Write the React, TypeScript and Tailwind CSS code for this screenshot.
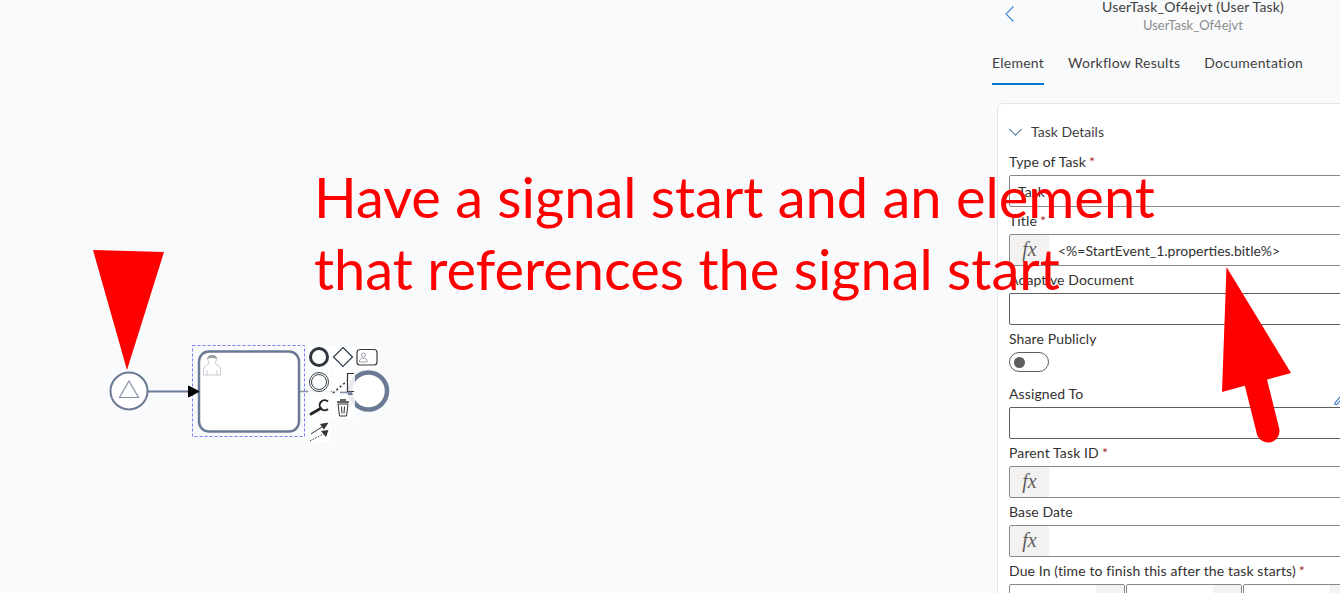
import React from "react";

const font = { fontFamily: 'Lato, sans-serif' };

function Label({ text, req, h = "h-[27px]" }: { text: string; req?: boolean; h?: string }) {
  return (
    <div className={`${h} flex items-center text-[14px] tracking-[0.12px] leading-none text-[#323130] whitespace-nowrap`}>
      {text}
      {req && <span className="ml-[3px] text-[#a4262c]">*</span>}
    </div>
  );
}

function Fx() {
  return (
    <div className="w-[39px] h-full bg-[#f3f2f1] flex items-center justify-center pb-[2px] text-[20px] italic text-[#605e5c] shrink-0 rounded-l-[2px] [font-family:'Liberation_Serif',serif]">
      fx
    </div>
  );
}

function FxInput({ value }: { value?: string }) {
  return (
    <div className="h-[32px] border border-[#8a8886] rounded-[2px] bg-white flex items-center">
      <Fx />
      <span className="ml-[9px] text-[14px] text-[#323130]">{value}</span>
    </div>
  );
}

function Select({ value, light }: { value?: string; light?: boolean }) {
  return (
    <div className={`h-[32px] border ${light ? "border-[#8a8886]" : "border-[#605e5c]"} rounded-[2px] bg-white flex items-center pl-[8px] pr-[38px] justify-between`}>
      <span className="text-[14px] text-[#323130]">{value}</span>
      <span className="w-[5px] h-[5px] border-r border-b border-[#8a6a4a] rotate-45" />
    </div>
  );
}

const tiles: [number, number][] = [
  [308, 346], [332, 346], [356, 346],
  [308, 370], [332, 370],
  [308, 395], [332, 395],
  [308, 419],
];

function Diagram() {
  return (
    <svg className="absolute left-0 top-0" width="420" height="460" viewBox="0 0 420 460" fill="none">
      <line x1="148" y1="391.5" x2="192" y2="391.5" stroke="#6b7a94" strokeWidth="2" />
      <circle cx="129" cy="391" r="18.5" fill="#fff" stroke="#6b7a94" strokeWidth="2" />
      <path d="M129 381 L138.5 397.5 H119.5 Z" stroke="#8592a8" strokeWidth="1.2" />
      <rect x="192.5" y="345.5" width="112" height="91" stroke="#7c7cf5" strokeWidth="1" strokeDasharray="3 2" />
      <rect x="199" y="351.5" width="100" height="80" rx="10" fill="#fff" stroke="#6b7a94" strokeWidth="2.5" />
      <path d="M188.5 386 L199 391.5 L188.5 397 Z" fill="#000" stroke="#000" />
      {/* user icon */}
      <path d="M203.5 375 V369 Q204 365.5 209 364 V362 Q206.5 359 208 357 Q212 354 216 357 Q217.5 359.5 215.5 362 V364 Q220.5 365.5 220.5 369 V375 Z" stroke="#c8ccd3" strokeWidth="1" fill="#fff" />
      <path d="M207 359 Q208 354.5 212 355 Q216.5 354.5 217 359 Q213 357 207 359 Z" fill="#9aa0a8" />
      <path d="M207 375 V370 M217 375 V370" stroke="#c8ccd3" />
      {/* outgoing connection and end event, under the pad */}
      <line x1="300" y1="391.5" x2="350" y2="391.5" stroke="#8592a8" strokeWidth="1.5" />
      <circle cx="368.5" cy="391" r="18.5" fill="#fff" stroke="#6b7a94" strokeWidth="4.5" />
      {/* context pad */}
      {tiles.map(([x, y]) => (
        <rect key={`${x}-${y}`} x={x} y={y} width="23" height="23" fill="#ffffff" fillOpacity="0.85" />
      ))}
      <circle cx="319" cy="357" r="8.5" stroke="#2f3640" strokeWidth="3" />
      <path d="M343 347.5 L352.5 357 L343 366.5 L333.5 357 Z" fill="#fff" stroke="#2f3a4a" strokeWidth="1.2" />
      <rect x="357" y="349.5" width="20" height="15.5" rx="3" fill="#fff" stroke="#3a3a3a" strokeWidth="1.2" />
      <circle cx="363.5" cy="355" r="2" stroke="#9aa0a8" />
      <path d="M359.5 362 V360 Q361 358 363.5 358 Q366 358 367 360 V362 Z" stroke="#9aa0a8" />
      <circle cx="319" cy="382" r="9.5" stroke="#3a4048" strokeWidth="1" />
      <circle cx="319" cy="382" r="7.5" stroke="#3a4048" strokeWidth="1" />
      <path d="M333 393 L347 381" stroke="#2a2a2a" strokeWidth="1.5" strokeDasharray="2 2.5" />
      <path d="M354 373.5 H347.5 V391.5 H354" stroke="#333" strokeWidth="1.2" />
      <line x1="340" y1="392.5" x2="352" y2="392.5" stroke="#8592a8" strokeWidth="1.5" />
      <path d="M311 414 L320.5 408.5" stroke="#262626" strokeWidth="3" strokeLinecap="round" />
      <path d="M328 401.5 A5 5 0 1 0 328 409" stroke="#262626" strokeWidth="2" />
      <path d="M337 402 H349 M340 400 H346" stroke="#333" strokeWidth="1.5" />
      <path d="M338 404 H348 L346.5 416 H339.5 Z M341.5 406.5 L342 413.5 M344.5 406.5 L344 413.5" stroke="#333" strokeWidth="1" />
      <path d="M311 434 L325 425" stroke="#333" strokeWidth="1" />
      <path d="M320 424 L328.5 422.5 L324 429.5 Z" fill="#333" />
      <path d="M310 441 L325 433" stroke="#333" strokeWidth="1" strokeDasharray="1.5 1.5" />
      <path d="M321 431 L328.5 430 L326 437 Z" fill="#333" />
    </svg>
  );
}

function Annotations() {
  return (
    <>
      <div className="absolute left-[314px] top-[161px] text-[56px] leading-[72px] text-[#ff0000] whitespace-nowrap [font-family:Lato,sans-serif]">
        Have a signal start and an element
        <br />
        that references the signal start
      </div>
      <svg className="absolute left-0 top-0" width="1340" height="593" viewBox="0 0 1340 593">
        <path d="M93 250 L164 252 L127 370 Z" fill="#ff0000" />
        <path d="M1226.5 267 L1291 373 L1222 392 Z" fill="#ff0000" />
        <path d="M1254 375 L1268 431" stroke="#ff0000" strokeWidth="23" strokeLinecap="round" />
      </svg>
    </>
  );
}

export default function App() {
  return (
    <div className="relative w-[1340px] h-[593px] overflow-hidden bg-[#f9fafc] flex justify-end" style={font}>
      <Diagram />
      <div className="w-[348px] shrink-0 flex flex-col">
        {/* header */}
        <div className="relative h-[35px] -mt-[2px] shrink-0 flex flex-col items-center w-[402px]">
          <div className="text-[14px] tracking-[0.18px] leading-[18px] text-[#3f3f3f] whitespace-nowrap">UserTask_Of4ejvt (User Task)</div>
          <div className="text-[13px] leading-[18px] text-[#8d8d8d] whitespace-nowrap">UserTask_Of4ejvt</div>
          <svg className="absolute left-[12px] top-[7px]" width="12" height="18" viewBox="0 0 12 18" fill="none">
            <path d="M9.5 1.5 L2 9 L9.5 16.5" stroke="#3f86d0" strokeWidth="1.1" />
          </svg>
        </div>
        {/* tabs */}
        <div className="flex gap-[24px] h-[70px] pt-[20px] shrink-0 text-[14px] tracking-[0.25px] leading-[20px] text-[#3f3f3f]">
          <div className="h-[32px] whitespace-nowrap border-b-2 border-[#0078d4]">Element</div>
          <div className="whitespace-nowrap">Workflow Results</div>
          <div className="whitespace-nowrap">Documentation</div>
        </div>
        {/* card */}
        <div className="ml-[5px] w-[400px] flex-1 bg-white border border-[#e6e6e6] rounded-tl-[6px] px-[11px] pt-[18px] shrink-0">
          <div className="flex items-center gap-[9px] h-[18px] text-[14px] text-[#3f3f3f]">
            <span className="ml-[2px] mr-[2px] w-[9px] h-[9px] border-r border-b border-[#3f6f93] rotate-45 -mt-[4px]" />
            Task Details
          </div>
          <div className="h-[14px]" />
          <Label text="Type of Task" req h="h-[16px]" />
          <div className="h-[5px]" />
          <Select value="Task" light />
          <Label text="Title" req />
          <FxInput value="<%=StartEvent_1.properties.bitle%>" />
          <Label text="Adaptive Document" />
          <Select />
          <Label text="Share Publicly" />
          <div className="w-[40px] h-[20px] rounded-full border border-[#605e5c] bg-white flex items-center pl-[4px]">
            <span className="w-[11px] h-[11px] rounded-full bg-[#605e5c]" />
          </div>
          <div className="h-[8px]" />
          <div className="relative">
            <Label text="Assigned To" />
            <svg className="absolute left-[324px] top-[15px]" width="12" height="12" viewBox="0 0 12 12" fill="none">
              <path d="M2 8 L7 2 L9 3.5 L4 9.5 H2 Z" stroke="#4a86c8" strokeWidth="1.2" />
            </svg>
          </div>
          <Select />
          <Label text="Parent Task ID" req />
          <FxInput />
          <Label text="Base Date" />
          <FxInput />
          <Label text="Due In (time to finish this after the task starts)" req />
          <div className="flex gap-[1px]">
            {[0, 1, 2].map((i) => (
              <div key={i} className="w-[116px] h-[32px] border border-[#8a8886] rounded-[2px] bg-white flex justify-end">
                <div className="w-[28px] bg-[#f3f2f1]" />
              </div>
            ))}
          </div>
        </div>
      </div>
      <Annotations />
    </div>
  );
}
